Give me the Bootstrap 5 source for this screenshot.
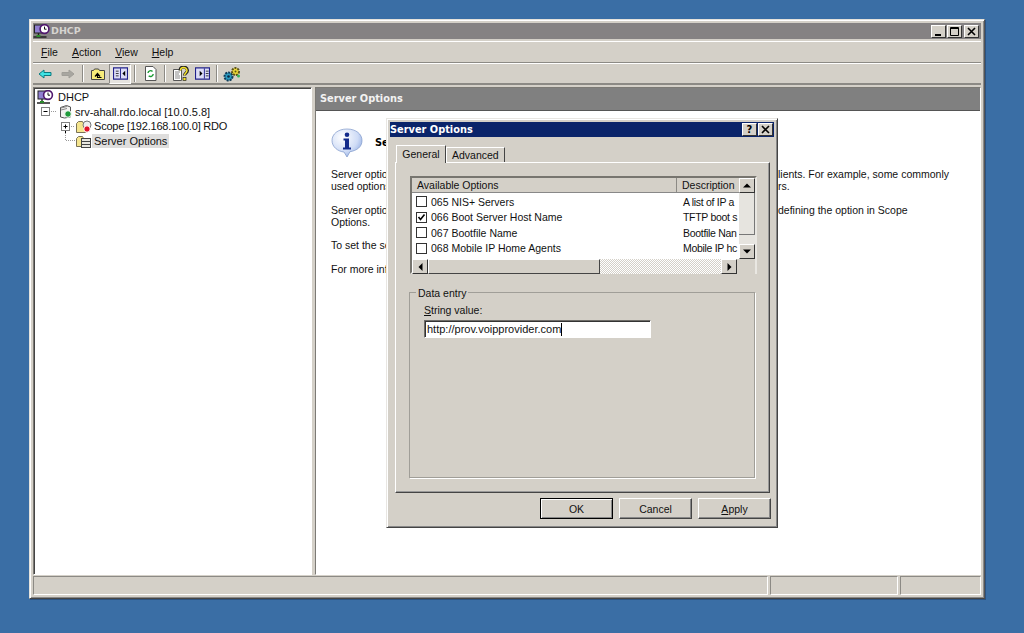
<!DOCTYPE html>
<html lang="en">
<head>
<meta charset="utf-8">
<title>DHCP</title>
<link href="https://cdn.jsdelivr.net/npm/bootstrap@5.3.0/dist/css/bootstrap.min.css" rel="stylesheet">
<style>
html,body{height:100%;}
body{background:#3a6ea5;font-family:"Liberation Sans",Arial,sans-serif;font-size:10.5px;line-height:12px;color:#111;overflow:hidden;}
.desk{width:1024px;height:633px;padding:19px 39px 34px 29px;position:relative;}
.mainwin{height:580px;background:#d4d0c8;border:1px solid;border-color:#e4e2dc #555 #444 #e4e2dc;box-shadow:inset 1px 1px 0 #fff,inset -1px -1px 0 #888,1px 1px 0 #2c5280;padding:3px;}
.ttl{height:16px;background:#858283;color:#d6d4d0;font-family:"DejaVu Sans",sans-serif;font-weight:700;font-size:9.5px;padding-right:2px;}
.capbtn{width:15px;height:13px;background:#d4d0c8;border:1px solid;border-color:#fff #333 #333 #fff;color:#000;}
.capbtns{gap:1px;}
.capclose{margin-left:1px;}
.bandm{height:22px;border-top:1px solid #fff;border-bottom:1px solid #8c8a85;margin-top:2px;padding-left:8px;gap:14px;}
.bandt{height:22px;border-bottom:2px solid #8c8a85;border-top:1px solid #fff;}
.tbi{width:22px;}
.tbw{width:23px;}
.tbon{background:#e6e4e0;border:1px solid;border-color:#8c8a85 #fff #fff #8c8a85;height:20px;}
.tbsep{width:2px;height:17px;border-left:1px solid #8c8a85;border-right:1px solid #fff;margin:0 3px;}
.panes{height:488px;margin-top:2px;gap:3px;}
.leftp{width:279px;background:#fff;border:1px solid;border-color:#7c7a75 #fff #fff #7c7a75;box-shadow:inset 1px 1px 0 #444;padding:2px 0 0 3px;font-size:11px;}
.rightp{width:666px;background:#fff;border:1px solid;border-color:#7c7a75 #fff #fff #7c7a75;}
.trow{height:14.6px;white-space:nowrap;}
.tgap{margin-right:4px;}
.tscope{letter-spacing:-.2px;}
.tsel{background:#dfdedd;padding:1px 2px;}
.phead{height:23px;background:#808080;color:#f2f2f2;font-family:"DejaVu Sans",sans-serif;font-weight:700;font-size:9.8px;padding-left:4px;border-bottom:1px solid #555;}
.pbody{padding:17px 0 0 15px;position:relative;}
.infoh{height:30px;gap:12px;font-family:"DejaVu Sans",sans-serif;font-weight:700;font-size:9.8px;color:#000;margin-bottom:10px;}
.tline{height:12px;white-space:nowrap;}
.tleft{width:447px;flex:none;}
.pgap{margin-bottom:11.5px;}
.statusb{height:19px;margin-top:1px;gap:2px;}
.stc{border:1px solid;border-color:#8c8a85 #fff #fff #8c8a85;height:19px;}
.sta{width:736px;}
.stb{width:128px;}
.stc3{width:81px;}
.dlg{position:absolute;left:386px;top:118px;width:392px;height:410px;background:#d4d0c8;border:1px solid;border-color:#e8e6e2 #444 #444 #e8e6e2;box-shadow:inset 1px 1px 0 #fff,inset -1px -1px 0 #888;padding:3px;}
.dttl{height:15px;background:#0a246a;color:#fff;font-family:"DejaVu Sans",sans-serif;font-weight:700;font-size:9.8px;padding:0 1px 0 0;}
.dttl .capbtn{font-size:10px;}
.tabsr{height:25px;padding:8px 0 0 6px;align-items:flex-end;}
.tabx{background:#d4d0c8;border:1px solid;border-color:#fff #444 transparent #fff;border-bottom:0;padding:0 5px;height:15px;line-height:14px;}
.tabon{height:18px;padding-top:1px;width:50px;position:relative;z-index:1;margin-bottom:-1px;text-align:center;}
.tabpane{height:331px;margin-left:5px;width:375px;border:1px solid;border-color:#fff #444 #444 #fff;box-shadow:inset -1px -1px 0 #999;padding:13px 14px 0 14px;}
.lst{width:347px;height:98px;border:2px solid #77756f;border-right-color:#e9e7e2;border-bottom-color:#e9e7e2;background:#fff;}
.lbody{flex:1;min-width:0;overflow:hidden;}
.lhead{height:15px;background:#d4d0c8;border-bottom:1px solid #888;}
.hcell{padding-left:5px;line-height:14px;}
.hca{width:265px;flex:none;border-right:1px solid #8c8a85;}
.lrows{height:66px;padding-top:1px;}
.lrow{height:15.5px;padding-left:4px;white-space:nowrap;}
.cbx{width:11px;height:11px;border:1px solid #333;background:#fff;flex:none;margin-right:4px;}
.cola{width:252px;flex:none;}
.colb{letter-spacing:-.3px;}
.sbar{width:16px;background:#e6e4df;height:81px;flex:none;}
.sthumb{height:42px;border-bottom:1px solid #777;border-right:1px solid #777;flex:none;}
.sbtn{width:16px;height:15px;background:#d4d0c8;border:1px solid;border-color:#fff #333 #333 #fff;flex:none;}
.hbar{height:15px;background:#d4d0c8;}
.hthumb{width:172px;height:15px;border:1px solid;border-color:#fff #444 #444 #fff;background:#d4d0c8;}
.htrack{flex:1;background:repeating-conic-gradient(#fff 0 25%,#d4d0c8 0 50%) 0 0/2px 2px;}
.corner{width:18px;background:#d4d0c8;}
.fset{margin:18px 0 0 -1px;width:346px;height:186px;border:1px solid #a09e98;box-shadow:1px 1px 0 #fff;position:relative;padding:11px 14px;}
.flegend{position:absolute;top:-6px;left:6px;background:#d4d0c8;padding:0 2px;}
.finp{width:227px;height:18px;background:#fff;border:1px solid;border-color:#6e6c68 #fff #fff #6e6c68;box-shadow:inset 1px 1px 0 #333;padding:2px 0 0 2px;margin-top:4px;font-size:11px;}
.caret{display:inline-block;width:1px;height:13px;background:#000;vertical-align:-3px;}
.dbtns{gap:6px;padding:5px 3px 0 0;}
.wbtn{width:73px;height:21px;background:#d4d0c8;border:1px solid;border-color:#fff #444 #444 #fff;box-shadow:inset -1px -1px 0 #888;}
.wdef{border:1px solid #000;box-shadow:inset 1px 1px 0 #fff,inset -1px -1px 0 #888;}
</style>
</head>
<body>
<div class="desk">
  <div class="mainwin d-flex flex-column">
    <div class="ttl d-flex align-items-center">
      <svg width="18" height="15" viewBox="0 0 17 15"><rect x="1" y="1" width="9" height="8" fill="#8f7fd0" stroke="#222"/><circle cx="11" cy="5" r="4.4" fill="#fff" stroke="#50186e" stroke-width="1.6"/><path d="M11 2.6V5.2H13" stroke="#111" fill="none"/><path d="M5 9v3M0 13h13" stroke="#222" stroke-width="1.4"/><rect x="3" y="11" width="4" height="2" fill="#2a8a2a"/></svg>
      <span class="ms-0">DHCP</span>
      <div class="d-flex ms-auto capbtns">
        <div class="capbtn d-flex"><svg width="13" height="11" viewBox="0 0 13 11"><rect x="3" y="8" width="6" height="2" fill="#000"/></svg></div>
        <div class="capbtn d-flex"><svg width="13" height="11" viewBox="0 0 13 11"><path d="M2.5 1.500h8v8h-8zM2 2.500h9" fill="none" stroke="#000"/></svg></div>
        <div class="capbtn capclose d-flex"><svg width="13" height="11" viewBox="0 0 13 11"><path d="M3 2l7 7M10 2l-7 7" stroke="#000" stroke-width="1.6"/></svg></div>
      </div>
    </div>
    <div class="bandm d-flex align-items-center">
      <span><u>F</u>ile</span><span><u>A</u>ction</span><span><u>V</u>iew</span><span><u>H</u>elp</span>
    </div>
    <div class="bandt d-flex align-items-center">
      <div class="tbw d-flex justify-content-center"><svg width="14" height="10" viewBox="0 0 14 10"><path d="M1 5L6 1V3.500H13V6.500H6V9Z" fill="#3fe4e4" stroke="#0c7a80"/></svg></div>
      <div class="tbw d-flex justify-content-center"><svg width="14" height="10" viewBox="0 0 14 10"><path d="M13 5L8 1V3.500H1V6.500H8V9Z" fill="#a8a6a0" stroke="#a09e98"/></svg></div>
      <div class="tbsep"></div>
      <div class="tbi d-flex justify-content-center"><svg width="16" height="14" viewBox="0 0 16 14"><path d="M1.500 12.500V3.500h2l1-1.500h4l1 1.500h5v9z" fill="#f7ec7a" stroke="#444"/><path d="M5 9.500l2.500-3 2.500 3M7.500 7v3.500h4" stroke="#000" fill="none" stroke-width="1.200"/></svg></div>
      <div class="tbi tbon d-flex justify-content-center align-items-center"><svg width="15" height="13" viewBox="0 0 16 13"><rect x=".5" y=".5" width="15" height="12" fill="#dcdcf6" stroke="#20208a" stroke-width="1.300"/><path d="M8 1v11" stroke="#20208a"/><path d="M3 4h3M3 6.500h3M3 9h3" stroke="#333"/><path d="M13 3.500v6L10 6.500z" fill="#000"/></svg></div>
      <div class="tbsep"></div>
      <div class="tbi d-flex justify-content-center"><svg width="13" height="15" viewBox="0 0 13 15"><path d="M1.500.5H9l3 3v11H1.500z" fill="#fff" stroke="#555"/><path d="M4 7a2.600 2.600 0 0 1 4.500-1.500M9.200 8a2.600 2.600 0 0 1-4.500 1.700" stroke="#1b9a32" stroke-width="1.400" fill="none"/></svg></div>
      <div class="tbsep"></div>
      <div class="tbi d-flex justify-content-center"><svg width="17" height="16" viewBox="0 0 17 16"><path d="M1.500 3.500h8v11h-8z" fill="#fff" stroke="#555"/><path d="M3 6h5M3 8h4M3 10h5M3 12h5" stroke="#888"/><path d="M8 4.500Q8 1 11.500 1T15.500 4.500C15.500 7 12.500 7 12.500 9.500" fill="none" stroke="#222" stroke-width="3"/><path d="M8.500 4.500Q8.500 1.500 11.500 1.500T15 4.500C15 7 12.500 7 12.500 9.500" fill="none" stroke="#f6e326" stroke-width="1.500"/><rect x="11" y="11.500" width="3" height="3" fill="#f6e326" stroke="#222" stroke-width=".7"/></svg></div>
      <div class="tbi d-flex justify-content-center"><svg width="15" height="13" viewBox="0 0 16 13"><rect x=".5" y=".5" width="15" height="12" fill="#dcdcf6" stroke="#20208a" stroke-width="1.300"/><path d="M10 1v11" stroke="#20208a"/><path d="M11.500 4h3M11.500 6.500h3M11.500 9h3" stroke="#333"/><path d="M5 3.500v6L8 6.500z" fill="#000"/></svg></div>
      <div class="tbsep"></div>
      <div class="tbi d-flex justify-content-center"><svg width="18" height="16" viewBox="0 0 18 16"><circle cx="5.500" cy="10.500" r="4" fill="#2a9ac0" stroke="#123c58" stroke-width="2" stroke-dasharray="2 1"/><circle cx="5.500" cy="10.500" r="1.300" fill="#0b2a44"/><circle cx="12.500" cy="5.500" r="3.500" fill="#ecd83a" stroke="#5a5218" stroke-width="2" stroke-dasharray="2 1"/><circle cx="12.500" cy="5.500" r="1" fill="#5a5218"/><circle cx="15.500" cy="10" r="1.500" fill="#33b45a"/></svg></div>
    </div>
    <div class="panes d-flex">
      <div class="leftp">
        <div class="trow d-flex align-items-center"><svg width="17" height="15" viewBox="0 0 17 15" class="tgap"><rect x="1" y="1" width="9" height="8" fill="#8f7fd0" stroke="#222"/><circle cx="11" cy="5" r="4.400" fill="#fff" stroke="#50186e" stroke-width="1.600"/><path d="M11 2.600V5.200H13" stroke="#111" fill="none"/><path d="M5 9v3M0 13h13" stroke="#222" stroke-width="1.400"/><rect x="3" y="11" width="4" height="2" fill="#2a8a2a"/></svg><span>DHCP</span></div>
        <div class="trow d-flex align-items-center">
          <svg width="38" height="15" viewBox="0 0 38 15"><rect x="4.500" y="3.500" width="8" height="8" fill="#fff" stroke="#808080"/><path d="M6.500 7.500h4" stroke="#000"/><path d="M14 7.500h6" stroke="#999" stroke-dasharray="1 1"/><path d="M23.500 3.500l6-2 4 1.500v10l-6 1-4-1z" fill="#f2f2f0" stroke="#555"/><path d="M24 4l6-1.500M24 6l6-1.500" stroke="#888"/><circle cx="31" cy="10" r="3.300" fill="#1f9a3a" stroke="#fff"/></svg><span>srv-ahall.rdo.local [10.0.5.8]</span></div>
        <div class="trow d-flex align-items-center">
          <svg width="57" height="15" viewBox="0 0 57 15"><rect x="24.500" y="3.500" width="8" height="8" fill="#fff" stroke="#808080"/><path d="M26.500 7.500h4M28.500 5.500v4M28.500 12v3" stroke="#000"/><path d="M34 7.500h4" stroke="#999" stroke-dasharray="1 1"/><path d="M39.500 13.500V4.500l2-2h4l1 2h2v9z" fill="#f5e58e" stroke="#7a7255"/><circle cx="50" cy="6" r="4" fill="#eee" stroke="#777"/><circle cx="50" cy="10" r="3.200" fill="#e0142a" stroke="#fff"/></svg><span class="tscope">Scope [192.168.100.0] RDO</span></div>
        <div class="trow d-flex align-items-center">
          <svg width="55" height="16" viewBox="0 0 55 16"><path d="M28.500 0v7.500h11" stroke="#999" stroke-dasharray="1 1" fill="none"/><path d="M39.500 13.500V5.500l2-2h4l1 2h2v8z" fill="#f5e58e" stroke="#7a7255"/><rect x="44.500" y="5.500" width="9" height="9" fill="#e8e6e0" stroke="#444"/><path d="M45 8.500h8M45 11.500h8" stroke="#444"/></svg><span class="tsel">Server Options</span></div>
      </div>
      <div class="rightp">
        <div class="phead d-flex align-items-center">Server Options</div>
        <div class="pbody">
          <div class="infoh d-flex align-items-center">
            <svg width="32" height="30" viewBox="0 0 32 30"><defs><radialGradient id="ig" cx=".35" cy=".3" r=".85"><stop offset="0" stop-color="#fff"/><stop offset=".6" stop-color="#cfdcf6"/><stop offset="1" stop-color="#7f9edc"/></radialGradient></defs><path d="M16 1C7 1 1 6 1 12.500S7 23.500 13 24l3 5 3-5.300C26 22.500 31 19 31 12.500S25 1 16 1z" fill="url(#ig)" stroke="#7c96c8" stroke-width=".7"/><circle cx="16" cy="6.700" r="2.300" fill="#132a8a"/><path d="M12.500 10.500h5.500v9h2v2h-8v-2h2v-7h-1.500z" fill="#132a8a"/></svg>
            <span>Server Options</span>
          </div>
          <div class="d-flex tline"><span class="tleft">Server options</span><span>lients. For example, some commonly</span></div>
          <div class="d-flex tline pgap"><span class="tleft">used options</span><span>rs.</span></div>
          <div class="d-flex tline"><span class="tleft">Server options</span><span>defining the option in Scope</span></div>
          <div class="d-flex tline pgap"><span class="tleft">Options.</span></div>
          <div class="d-flex tline pgap"><span class="tleft">To set the server</span></div>
          <div class="d-flex tline"><span class="tleft">For more information</span></div>
        </div>
      </div>
    </div>
    <div class="statusb d-flex">
      <div class="stc sta"></div>
      <div class="stc stb"></div>
      <div class="stc stc3"></div>
    </div>
  </div>

  <div class="dlg d-flex flex-column">
    <div class="dttl d-flex align-items-center">
      <span>Server Options</span>
      <div class="d-flex ms-auto capbtns">
        <div class="capbtn d-flex align-items-center justify-content-center fw-bold">?</div>
        <div class="capbtn d-flex"><svg width="13" height="11" viewBox="0 0 13 11"><path d="M3 2l7 7M10 2l-7 7" stroke="#000" stroke-width="1.600"/></svg></div>
      </div>
    </div>
    <div class="tabsr d-flex">
      <div class="tabx tabon">General</div>
      <div class="tabx">Advanced</div>
    </div>
    <div class="tabpane">
      <div class="lst d-flex flex-column">
        <div class="d-flex">
          <div class="lbody">
            <div class="lhead d-flex"><div class="hcell hca">Available Options</div><div class="hcell flex-fill">Description</div></div>
            <div class="lrows">
              <div class="lrow d-flex align-items-center"><span class="cbx"></span><span class="cola">065 NIS+ Servers</span><span class="colb">A list of IP a</span></div>
              <div class="lrow d-flex align-items-center"><span class="cbx d-flex"><svg width="9" height="9" viewBox="0 0 9 9"><path d="M1.500 4l2 2.500 4-5" stroke="#000" stroke-width="1.600" fill="none"/></svg></span><span class="cola">066 Boot Server Host Name</span><span class="colb">TFTP boot s</span></div>
              <div class="lrow d-flex align-items-center"><span class="cbx"></span><span class="cola">067 Bootfile Name</span><span class="colb">Bootfile Nan</span></div>
              <div class="lrow d-flex align-items-center"><span class="cbx"></span><span class="cola">068 Mobile IP Home Agents</span><span class="colb">Mobile IP hc</span></div>
            </div>
          </div>
          <div class="sbar d-flex flex-column">
            <div class="sbtn d-flex align-items-center justify-content-center"><svg width="8" height="5" viewBox="0 0 8 5"><path d="M0 4.500L4 .5l4 4z" fill="#000"/></svg></div>
            <div class="sthumb"></div>
            <div class="flex-fill"></div>
            <div class="sbtn d-flex align-items-center justify-content-center"><svg width="8" height="5" viewBox="0 0 8 5"><path d="M0 .5L4 4.500l4-4z" fill="#000"/></svg></div>
          </div>
        </div>
        <div class="hbar d-flex">
          <div class="sbtn d-flex align-items-center justify-content-center"><svg width="5" height="8" viewBox="0 0 5 8"><path d="M4.500 0L.5 4l4 4z" fill="#000"/></svg></div>
          <div class="hthumb"></div>
          <div class="htrack"></div>
          <div class="sbtn d-flex align-items-center justify-content-center"><svg width="5" height="8" viewBox="0 0 5 8"><path d="M.5 0L4.500 4l-4 4z" fill="#000"/></svg></div>
          <div class="corner"></div>
        </div>
      </div>
      <div class="fset">
        <span class="flegend">Data entry</span>
        <label class="d-block"><u>S</u>tring value:</label>
        <div class="finp">http://prov.voipprovider.com<span class="caret"></span></div>
      </div>
    </div>
    <div class="dbtns d-flex justify-content-end">
      <div class="wbtn wdef d-flex align-items-center justify-content-center">OK</div>
      <div class="wbtn d-flex align-items-center justify-content-center">Cancel</div>
      <div class="wbtn d-flex align-items-center justify-content-center"><span><u>A</u>pply</span></div>
    </div>
  </div>
</div>
</body>
</html>
